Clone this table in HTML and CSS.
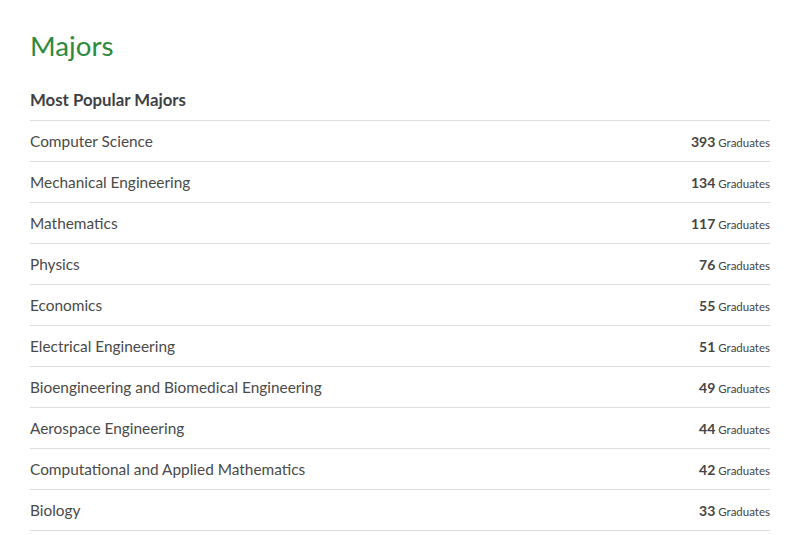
FILE: index.html
```html
<!DOCTYPE html>
<html>
<head>
<meta charset="utf-8">
<link rel="stylesheet" href="styles.css">
</head>
<body>
<main class="panel">
  <h1 class="title">Majors</h1>
  <h2 class="subtitle">Most Popular Majors</h2>
  <ul class="list">
    <li class="row"><span class="name">Computer Science</span><span class="count"><b>393</b> Graduates</span></li>
    <li class="row"><span class="name">Mechanical Engineering</span><span class="count"><b>134</b> Graduates</span></li>
    <li class="row"><span class="name">Mathematics</span><span class="count"><b>117</b> Graduates</span></li>
    <li class="row"><span class="name">Physics</span><span class="count"><b>76</b> Graduates</span></li>
    <li class="row"><span class="name">Economics</span><span class="count"><b>55</b> Graduates</span></li>
    <li class="row"><span class="name">Electrical Engineering</span><span class="count"><b>51</b> Graduates</span></li>
    <li class="row"><span class="name">Bioengineering and Biomedical Engineering</span><span class="count"><b>49</b> Graduates</span></li>
    <li class="row"><span class="name">Aerospace Engineering</span><span class="count"><b>44</b> Graduates</span></li>
    <li class="row"><span class="name">Computational and Applied Mathematics</span><span class="count"><b>42</b> Graduates</span></li>
    <li class="row"><span class="name">Biology</span><span class="count"><b>33</b> Graduates</span></li>
  </ul>
</main>
</body>
</html>
```
FILE: styles.css
```css
html, body {
  margin: 0;
  padding: 0;
  background: #fff;
}
body {
  font-family: Lato, "Noto Sans", sans-serif;
  color: #444;
}
.panel {
  padding: 26px 30px 0 30px;
}
.title {
  margin: 0;
  font-size: 27.7px;
  font-weight: 400;
  line-height: 40px;
  color: #2d8a3e;
}
.subtitle {
  margin: 20px 0 0 0;
  font-size: 16.8px;
  font-weight: 700;
  line-height: 28px;
  color: #3f3f46;
  padding-bottom: 6px;
  border-bottom: 1px solid #ddd;
}
.list {
  list-style: none;
  margin: 0;
  padding: 0;
}
.row {
  display: flex;
  justify-content: space-between;
  align-items: center;
  height: 40px;
  border-bottom: 1px solid #ddd;
  font-size: 15.4px;
}
.name {
  color: #4a4a4a;
}
.count {
  font-size: 11.5px;
  color: #444;
}
.count b {
  font-size: 14px;
  font-weight: 700;
  color: #444;
}
```
